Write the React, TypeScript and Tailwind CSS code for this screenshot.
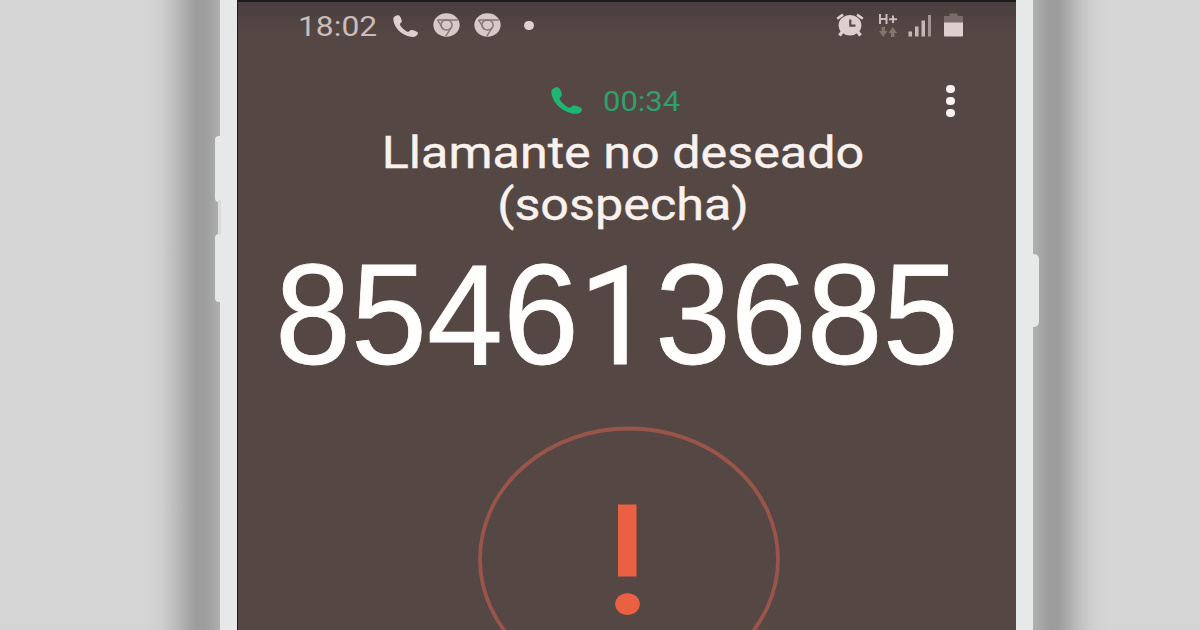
function PhoneIcon({ className }: { className: string }) {
  return (
    <svg viewBox="3 3 18 18" preserveAspectRatio="none" fill="currentColor" className={className}>
      <path d="M7 3.2 C5.3 3 3.4 4.2 3.2 6 C3.4 13.6 10.2 20.6 17.6 20.9 C19.6 20.9 21 19.4 21 17.6 C21 16.6 16.8 15 15.9 15.3 C15.1 15.6 14.6 17 13.5 16.8 C11.4 15.8 8.9 13 8 11 C7.8 9.9 9.2 9.4 9.4 8.4 C9.5 7.6 8.2 3.3 7 3.2 Z" />
    </svg>
  )
}

function ChromeIcon() {
  return (
    <svg viewBox="0 0 24 24" preserveAspectRatio="none" className="h-6 w-[27px]">
      <circle cx="12" cy="12" r="11.7" fill="#d6cac8" />
      <g fill="none" stroke="#85766f" strokeWidth="1.3">
        <circle cx="12" cy="12" r="5" />
        <path d="M4 7H22M4 7L9.3 16.2M16.3 14.5L11.3 23.3" />
      </g>
      <circle cx="12" cy="12" r="3.9" fill="#d6cac8" />
    </svg>
  )
}

function AlarmIcon() {
  return (
    <svg viewBox="0 0 28 24" className="h-6 w-7" fill="none" stroke="#dccfce">
      <ellipse cx="14" cy="12.3" rx="11.4" ry="10.3" fill="#dccfce" stroke="none" />
      <path d="M1.2 5.8L7 1.6M26.8 5.8L21 1.6" strokeWidth="2.6" />
      <path d="M6.5 18.5L3.5 22.5M21.5 18.5L24.5 22.5" strokeWidth="3.4" />
      <path d="M14.3 6.5V12.6H19.5" stroke="#5b4b48" strokeWidth="2.2" />
    </svg>
  )
}

function DataIcon() {
  return (
    <svg viewBox="0 0 20 25" className="h-[25px] w-5">
      <g fill="none" stroke="#c9bcba" strokeWidth="2">
        <path d="M2 1V11M8.5 1V11M2 6H8.5M11 6.2H19M15 2.5V10" />
      </g>
      <g fill="#85736f">
        <path d="M3.5 14H7V18H9.5L5.2 24L1 18H3.5Z" />
        <path d="M13 24H16.5V20H19L14.8 14L10.5 20H13Z" />
      </g>
    </svg>
  )
}

function SignalIcon() {
  return (
    <svg viewBox="0 0 24 23" className="h-[23px] w-6" fill="#c5b8b5">
      <rect x="0.5" y="17.5" width="3.5" height="5" />
      <rect x="7" y="12.5" width="3.5" height="10" />
      <rect x="13.5" y="6.5" width="3.5" height="16" />
      <rect x="20" y="1" width="3" height="21.5" fill="#a39491" />
    </svg>
  )
}

function BatteryIcon() {
  return (
    <svg viewBox="0 0 19 24" className="h-6 w-[19px]">
      <path d="M5.5 0.5H13.5V3H18C18.6 3 19 3.4 19 4V10H0V4C0 3.4 0.4 3 1 3H5.5Z" fill="#7c6c69" />
      <path d="M0 9.5H19V22.5C19 23.2 18.6 23.5 18 23.5H1C0.4 23.5 0 23.2 0 22.5Z" fill="#dccfce" />
    </svg>
  )
}

function StatusBar() {
  return (
    <div className="flex h-[52px] shrink-0 items-start justify-between pl-[60px] pr-[53px] pt-[11px] text-[#c9bcba]">
      <div className="flex h-6 items-center">
        <span className="mt-[3px] w-[95px] origin-left scale-x-[1.135] whitespace-nowrap text-[28px] leading-6">18:02</span>
        <PhoneIcon className="mt-px h-[22px] w-[25px] text-[#ddd0ce]" />
        <div className="ml-[15px] flex gap-[14px]">
          <ChromeIcon />
          <ChromeIcon />
        </div>
        <span className="ml-[23px] h-[9px] w-[10px] rounded-full bg-[#ddd0ce]" />
      </div>
      <div className="flex h-6 items-center">
        <AlarmIcon />
        <div className="ml-[14px]">
          <DataIcon />
        </div>
        <div className="ml-[10px] mt-px">
          <SignalIcon />
        </div>
        <div className="ml-3">
          <BatteryIcon />
        </div>
      </div>
    </div>
  )
}

function CallHeader() {
  return (
    <div className="flex h-[73px] shrink-0 items-start pl-[313px] pr-[61px] pt-[31px]">
      <PhoneIcon className="mt-[2px] h-[27px] w-[31px] text-[#1fb573]" />
      <span className="ml-[21px] mt-[3px] origin-left scale-x-[1.105] text-[28px] leading-7 text-[#2fa06b]">00:34</span>
      <div className="ml-auto flex flex-col gap-1">
        <span className="h-2 w-[9px] rounded-full bg-[#fbf3f1]" />
        <span className="h-2 w-[9px] rounded-full bg-[#fbf3f1]" />
        <span className="h-2 w-[9px] rounded-full bg-[#fbf3f1]" />
      </div>
    </div>
  )
}

function WarningCircle() {
  return (
    <svg viewBox="0 0 304 266" className="ml-[239px] h-[266px] w-[304px] shrink-0">
      <ellipse cx="152" cy="133" rx="149" ry="130.5" fill="none" stroke="#99554a" strokeWidth="3.8" />
      <rect x="141" y="78.5" width="18.5" height="72" fill="#e96142" />
      <ellipse cx="150.5" cy="178" rx="12.3" ry="10.8" fill="#e96142" />
    </svg>
  )
}

export default function App() {
  return (
    <div className="flex h-[630px] w-[1200px] overflow-hidden bg-[#d5d5d5] font-['Roboto',sans-serif]">
      <div className="w-[220px] shrink-0 bg-[linear-gradient(to_right,#d5d5d5_145px,#cecece_162px,#b9b9b9_178px,#9d9d9d_195px,#9d9d9d_206px,#b0b0b0_220px)]" />

      <div className="relative flex w-[813px] shrink-0 bg-[#e7e8e8] pl-[17px]">
        {/* volume and power keys */}
        <span className="absolute -left-[5px] top-[136px] h-[66px] w-[6px] rounded-l-[4px] bg-[#e7e8e8]" />
        <span className="absolute -left-[2px] top-[200px] h-[36px] w-[3px] bg-[#dcdddd]" />
        <span className="absolute -left-[5px] top-[234px] h-[68px] w-[6px] rounded-l-[4px] bg-[#e7e8e8]" />
        <span className="absolute -right-[6px] top-[254px] h-[73px] w-[7px] rounded-r-[5px] bg-[#e7e8e8]" />

        <div className="flex h-full w-[779px] flex-col overflow-hidden border-l border-t-2 border-[#1f1a1c] bg-[#554743] bg-[linear-gradient(to_bottom,#4a3f3f_0px,#554743_32px)]">
          <StatusBar />
          <CallHeader />
          <div className="h-[128px] w-[770px] shrink-0 text-center text-[44px] leading-[52px] text-[#f9f1ee] [-webkit-text-stroke:0.4px_#f9f1ee]">
            <div className="scale-x-[1.143]">
              Llamante no deseado
              <br />
              (sospecha)
            </div>
          </div>
          <div className="ml-[37px] h-[171px] w-[690px] shrink-0 origin-left scale-x-[0.962] whitespace-nowrap font-['Liberation_Sans',sans-serif] text-[142px] leading-[120px] text-[#fffefd] [-webkit-text-stroke:0.8px_#fffefd]">
            8546
            {/* Roboto's 1 has no foot */}
            <span className="inline-block w-[79px] font-['Roboto',sans-serif] text-[138px] leading-[110px]">1</span>
            3685
          </div>
          <WarningCircle />
        </div>
      </div>

      <div className="grow bg-[linear-gradient(to_right,#b0b0b0_0px,#9c9c9c_16px,#9d9d9d_26px,#b2b2b2_38px,#c6c6c6_50px,#d2d2d2_63px,#d5d5d5_76px)]" />
    </div>
  )
}
